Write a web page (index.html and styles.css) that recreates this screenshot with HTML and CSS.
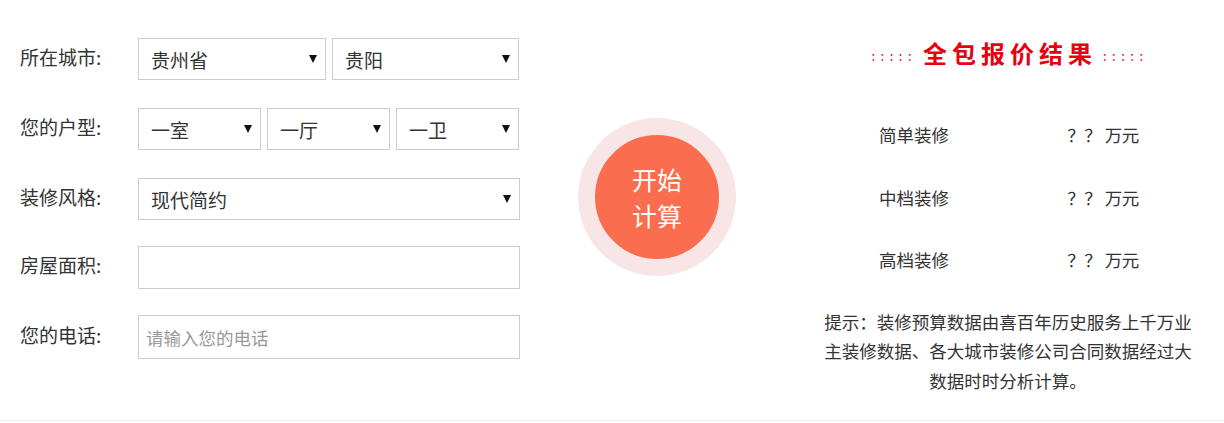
FILE: index.html
```html
<!DOCTYPE html>
<html lang="zh-CN">
<head>
	<meta charset="UTF-8">
	<title>装修报价</title>
	<link rel="stylesheet" href="styles.css">
</head>
<body>
	<div class="calc">
		<div class="form">
			<div class="row">
				<label>所在城市:</label>
				<div class="sel w188"><select><option>贵州省</option></select></div>
				<div class="sel w187"><select><option>贵阳</option></select></div>
			</div>
			<div class="row">
				<label>您的户型:</label>
				<div class="sel w123"><select><option>一室</option></select></div>
				<div class="sel w123"><select><option>一厅</option></select></div>
				<div class="sel w123"><select><option>一卫</option></select></div>
			</div>
			<div class="row">
				<label>装修风格:</label>
				<div class="sel wfull"><select><option>现代简约</option></select></div>
			</div>
			<div class="row">
				<label>房屋面积:</label>
				<input type="text" class="ipt">
			</div>
			<div class="row">
				<label>您的电话:</label>
				<input type="text" class="ipt tall" placeholder="请输入您的电话">
			</div>
		</div>

		<div class="btn-wrap">
			<div class="btn">开始<br>计算</div>
		</div>

		<div class="result">
			<h3><span class="dots">:::::</span>全包报价结果<span class="dots">:::::</span></h3>
			<ul>
				<li><span>简单装修</span><span>？？ 万元</span></li>
				<li><span>中档装修</span><span>？？ 万元</span></li>
				<li><span>高档装修</span><span>？？ 万元</span></li>
			</ul>
			<p class="tip">提示：装修预算数据由喜百年历史服务上千万业主装修数据、各大城市装修公司合同数据经过大数据时时分析计算。</p>
		</div>
	</div>
</body>
</html>
```

FILE: styles.css
```css
*{margin:0;padding:0;box-sizing:border-box;}
body{
	background:#fff;
	font-family:"Microsoft YaHei","Noto Sans CJK SC",sans-serif;
	color:#333;
}
ul{list-style:none;}
.calc{
	display:flex;
	height:421px;
	padding-top:38px;
	border-bottom:1px solid #ececec;
}
.form{
	width:520px;
	padding-left:20px;
}
.row{
	display:flex;
	gap:6px;
	height:42px;
	margin-bottom:28px;
	align-items:center;
}
.row:nth-child(3){margin-bottom:26px;}
.row:nth-child(4){margin-bottom:27px;height:43px;}
.row label{
	width:112px;
	font-size:19px;
	color:#333;
	margin-top:-6px;
}
.sel{
	position:relative;
	height:42px;
}
.sel select{
	width:100%;
	height:100%;
	border:1px solid #ccc;
	background:#fff;
	appearance:none;
	-webkit-appearance:none;
	outline:none;
	font-family:inherit;
	font-size:19px;
	color:#333;
	padding-left:12px;
}
.sel::after{
	content:"";
	position:absolute;
	right:9px;
	top:17px;
	border-left:4px solid transparent;
	border-right:4px solid transparent;
	border-top:8px solid #111;
	pointer-events:none;
}
.w188{width:188px;}
.w187{width:187px;}
.w123{width:123px;}
.wfull{width:382px;}
.ipt{
	width:382px;
	height:43px;
	border:1px solid #ccc;
	outline:none;
	font-family:inherit;
	font-size:17.5px;
	padding-left:7px;
	color:#333;
}
.ipt.tall{height:44px;}
.ipt::placeholder{color:#999;}

.btn-wrap{
	width:298px;
	padding-left:58px;
	padding-top:80px;
}
.btn{
	width:158px;
	height:158px;
	border-radius:50%;
	border:17px solid #f8e5e6;
	background:#fa6d4f;
	color:#fff;
	font-size:25px;
	line-height:36px;
	text-align:center;
	padding-top:26px;
	cursor:pointer;
}

.result{
	width:380px;
	text-align:center;
}
.result h3{
	color:#e8000f;
	font-size:24px;
	font-weight:bold;
	letter-spacing:5px;
	line-height:30px;
	padding-left:4px;
}
.dots{
	font-size:13px;
	font-weight:normal;
	letter-spacing:5.5px;
	margin:0 6px 0 6px;
	vertical-align:2px;
}
.result ul{
	margin-top:52px;
}
.result li{
	display:flex;
	height:62.5px;
	font-size:17.5px;
	line-height:24px;
	color:#333;
}
.result li span{
	width:190px;
	text-align:center;
}
.result li span:first-child{padding-left:2px;}
.result li span:last-child{letter-spacing:-0.5px;}
.tip{
	width:370px;
	margin:-4px auto 0;
	font-size:17.5px;
	line-height:29.5px;
	color:#333;
	text-spacing-trim:space-all;
}
```
